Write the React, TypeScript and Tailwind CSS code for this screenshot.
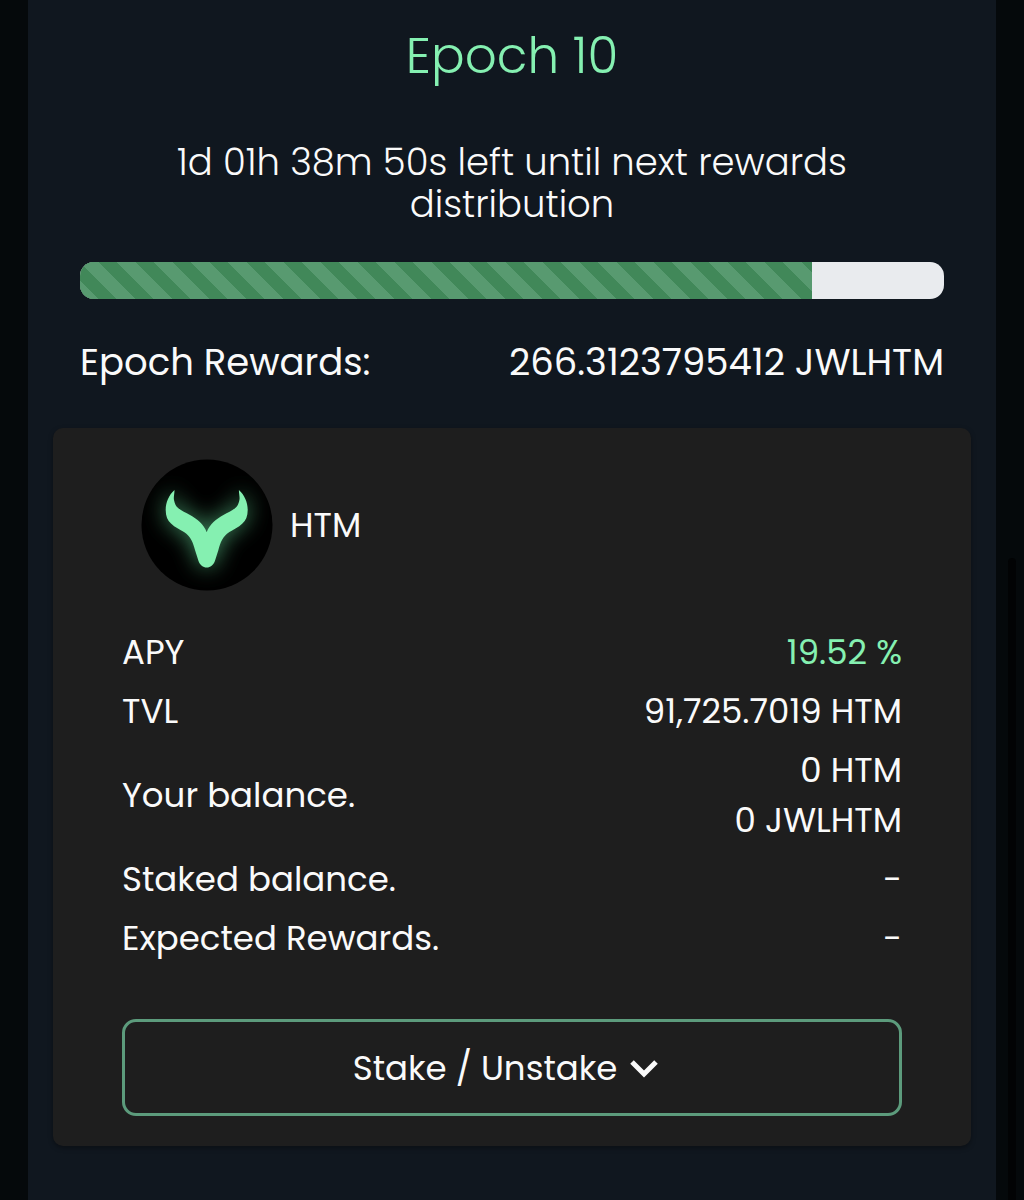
import type { ReactNode } from "react";

const EPOCH_PROGRESS = 84.7;

function HtmLogo() {
  return (
    <svg viewBox="0 0 132 132" className="size-33 shrink-0" role="img" aria-label="HTM logo">
      <defs>
        <filter id="glow" x="-60%" y="-60%" width="220%" height="220%">
          <feGaussianBlur stdDeviation="11" />
        </filter>
        <clipPath id="disc">
          <circle cx="66" cy="66" r="65.500" />
        </clipPath>
        <path
          id="horns"
          d="M33.500 31C28 36 24.700 43 24.700 51C24.700 57 26.500 61.500 30 64.500C34 68.500 39 70.500 43 73C50 77.500 52 83.500 54 91L57.500 102C59 106 62 108.500 65.700 108.500C69.400 108.500 72.400 106 73.900 102L77.400 91C79.400 83.500 81.400 77.500 88.400 73C92.400 70.500 97.400 68.500 101.400 64.500C104.900 61.500 106.700 57 106.700 51C106.700 43 103.400 36 97.900 31C97.900 35 99 38 98.400 41C97.500 45 96.500 47.500 94 49.300C91 52 86.500 53.500 82.400 56C75.500 60 68.500 65 65.700 73.300C62.900 65 55.900 60 49 56C44.900 53.500 40.400 52 37.400 49.300C34.900 47.500 33.900 45 33 41C32.400 38 33.500 35 33.500 31Z"
        />
      </defs>
      <circle cx="66" cy="66" r="65.500" fill="#000000" />
      <g clipPath="url(#disc)">
        <use href="#horns" fill="#5bc58a" opacity="0.7" filter="url(#glow)" />
      </g>
      <use href="#horns" fill="#85f0b1" />
    </svg>
  );
}

function Row({ label, children }: { label: string; children: ReactNode }) {
  return (
    <tr>
      <th scope="row" className="pt-1 pb-[5px] text-left font-normal">{label}</th>
      <td className="pt-1 pb-[5px] text-right">{children}</td>
    </tr>
  );
}

export default function App() {
  return (
    <div className="relative min-h-screen bg-[#05090b] px-7 font-['Poppins','Inter',sans-serif] text-[#fafafa]">
      <main className="min-h-screen bg-[#10171f] px-[25px] pt-7 pb-[53px]">
        <header className="px-7 text-center font-light">
          <h1 className="text-[50px] leading-[56px] text-[#85f0b1]">Epoch 10</h1>
          <p className="mx-auto mt-[57px] max-w-[720px] text-[37px] leading-[42px]">
            1d 01h 38m 50s left until next rewards distribution
          </p>
        </header>

        <section className="px-[27px]" aria-label="Epoch progress">
          <div
            role="progressbar"
            aria-label="Epoch progress"
            aria-valuenow={EPOCH_PROGRESS}
            aria-valuemin={0}
            aria-valuemax={100}
            className="mt-[37px] h-[37px] overflow-hidden rounded-[14px] bg-[#e9ebee]"
          >
            <div
              className="h-full bg-[#418859] bg-[linear-gradient(45deg,#589a70_25%,transparent_25%,transparent_50%,#589a70_50%,#589a70_75%,transparent_75%)] bg-[length:37px_37px]"
              style={{ width: `${EPOCH_PROGRESS}%` }}
            />
          </div>
          <div className="mt-[35px] flex flex-wrap justify-between text-[37px] leading-[56px]">
            <span>Epoch Rewards:</span>
            <span>266.3123795412 JWLHTM</span>
          </div>
        </section>

        <article className="mt-[38px] rounded-[10px] bg-[#1e1e1e] px-[69px] pt-[31px] pb-[30px] text-[34px] leading-[50px] shadow-[0_2px_5px_rgba(0,0,0,0.35)]">
          <div className="flex items-center gap-[17px] pl-[19px]">
            <HtmLogo />
            <h2>HTM</h2>
          </div>
          <table className="mt-8 w-full">
            <tbody>
              <Row label="APY">
                <span className="text-[#85f0b1]">19.52 %</span>
              </Row>
              <Row label="TVL">91,725.7019 HTM</Row>
              <Row label="Your balance.">
                <div>0 HTM</div>
                <div>0 JWLHTM</div>
              </Row>
              <Row label="Staked balance.">-</Row>
              <Row label="Expected Rewards.">-</Row>
            </tbody>
          </table>
          <button
            type="button"
            className="mt-[51px] flex h-[97px] w-full items-center justify-center gap-3 rounded-[14px] border-3 border-[#5c9b7c] pr-3"
          >
            Stake / Unstake
            <svg viewBox="0 0 30 20" className="h-5 w-[30px]" fill="none" stroke="currentColor" strokeWidth="5" aria-hidden="true">
              <path d="M3 4L15 16L27 4" />
            </svg>
          </button>
        </article>
      </main>
      <div className="absolute top-[558px] right-2 bottom-0 w-2 rounded-t-full bg-[#020304]" aria-hidden="true" />
    </div>
  );
}
